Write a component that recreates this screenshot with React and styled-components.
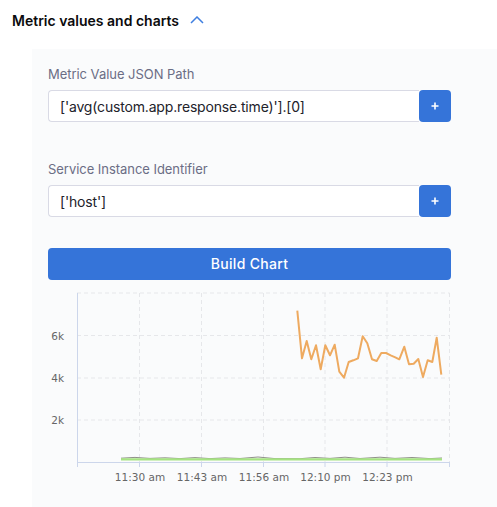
import React from "react";
import styled, { createGlobalStyle } from "styled-components";

const GlobalStyle = createGlobalStyle`
  html, body {
    margin: 0;
    padding: 0;
    background: #fff;
    font-family: Inter, "Noto Sans", sans-serif;
  }
`;

const Page = styled.div`
  width: 497px;
  height: 507px;
  overflow: hidden;
`;

const SectionHeader = styled.div`
  display: flex;
  align-items: center;
  gap: 11px;
  height: 20px;
  padding: 10px 0 0 12px;
  font-size: 14px;
  font-weight: 600;
  color: #0b0b0d;
`;

const Panel = styled.div`
  margin: 19px 0 0 32px;
  height: 455px;
  padding: 16px 46px 0 16px;
  background: #fafbfc;
`;

const Label = styled.div`
  font-size: 13px;
  line-height: 18px;
  letter-spacing: -0.04px;
  color: #6b6d85;
  margin-bottom: 7px;
`;

const FieldRow = styled.div`
  display: flex;
  height: 32px;
  margin-bottom: ${(p) => p.$gap}px;
`;

const Input = styled.div`
  flex: 1;
  display: flex;
  align-items: center;
  padding-left: 11px;
  background: #fff;
  border: 1px solid #d9dae5;
  border-right: none;
  border-radius: 4px 0 0 4px;
  font-size: 14px;
  letter-spacing: -0.17px;
  color: #22222a;
`;

const AddButton = styled.button`
  width: 32px;
  padding: 0;
  display: flex;
  align-items: center;
  justify-content: center;
  background: #3574d9;
  border: none;
  border-radius: 4px;
`;

const BuildButton = styled.button`
  display: block;
  width: 100%;
  height: 32px;
  padding: 0 0 2px;
  background: #3574d9;
  border: none;
  border-radius: 4px;
  color: #fff;
  font-family: inherit;
  font-size: 14px;
  font-weight: 500;
  letter-spacing: 0.3px;
`;

const ChartBox = styled.svg`
  display: block;
  margin: 0 0 0 -16px;
`;

const Tick = styled.text`
  font-family: "DejaVu Sans", sans-serif;
  font-size: 10.5px;
  fill: #666;
`;

// chart drawn in page coords minus the panel origin (32, 280)
const ox = 32;
const oy = 280;

const orange = [
  [297.3, 310.7], [302, 358.3], [306.7, 341], [311.3, 359.3], [316, 345.3], [320.7, 369.3],
  [325.3, 345.3], [330, 355.3], [334.7, 344.7], [339.3, 371.7], [344, 377.7], [348.7, 362],
  [353.3, 360.3], [358, 358.3], [362.7, 336.3], [367.3, 343.3], [372, 359.3], [376.7, 361],
  [381.3, 353], [386, 353], [390.7, 355.3], [395.3, 357.3], [399.3, 359.3], [404.3, 346.7],
  [409, 364.3], [413.7, 363.7], [418.3, 359], [423, 377], [427.7, 360.3], [432.3, 362],
  [436.7, 337.7], [441.3, 374.7],
];

const greys = [
  [121, 458.2], [135, 457.4], [150, 458.4], [165, 457.8], [180, 458.6], [195, 457.6], [210, 458.6],
  [225, 457.9], [240, 458.5], [258, 457], [275, 458.6], [300, 458.7], [315, 457.5], [330, 458.4],
  [345, 457.2], [360, 458.5], [380, 457.2], [395, 458.4], [412, 457.5], [430, 458.6], [442, 458],
];

const toPoints = (list) => list.map(([x, y]) => `${x - ox},${y - oy}`).join(" ");

const vLines = [139.5, 201.5, 263.5, 325, 387, 449.5];
const hLines = [293, 335.5, 378, 420];
const yTicks = [["6k", 340], ["4k", 382], ["2k", 424]];
const xTicks = [["11:30 am", 140], ["11:43 am", 202], ["11:56 am", 264], ["12:10 pm", 325.5], ["12:23 pm", 387.5]];

function Chart() {
  return (
    <ChartBox width="465" height="220" viewBox="0 0 465 220">
      {hLines.map((y) => (
        <line key={y} x1={77 - ox} x2={449.5 - ox} y1={y - oy} y2={y - oy} stroke="#e6e7ea" strokeDasharray="4 3" />
      ))}
      {vLines.map((x) => (
        <line key={x} x1={x - ox} x2={x - ox} y1={293 - oy} y2={462 - oy} stroke="#e6e7ea" strokeDasharray="4 3" />
      ))}
      <line x1={77.5 - ox} x2={77.5 - ox} y1={293 - oy} y2={467 - oy} stroke="#ccd6eb" />
      <line x1={77 - ox} x2={450 - ox} y1={462.5 - oy} y2={462.5 - oy} stroke="#ccd6eb" />
      {vLines.map((x) => (
        <line key={`t${x}`} x1={x - ox} x2={x - ox} y1={462 - oy} y2={467 - oy} stroke="#ccd6eb" />
      ))}
      <polyline points={toPoints(greys)} fill="none" stroke="#8f9188" strokeWidth="1" />
      <line x1={121 - ox} x2={442 - ox} y1={459.3 - oy} y2={459.3 - oy} stroke="#a6e382" strokeWidth="2.2" />
      <polyline points={toPoints(orange)} fill="none" stroke="#eeaa60" strokeWidth="2" strokeLinejoin="round" />
      {yTicks.map(([t, y]) => (
        <Tick key={t} x={64 - ox} y={y - oy} textAnchor="end">{t}</Tick>
      ))}
      {xTicks.map(([t, x]) => (
        <Tick key={t} x={x - ox} y={481 - oy} textAnchor="middle">{t}</Tick>
      ))}
    </ChartBox>
  );
}

const Plus = () => (
  <svg width="8" height="8" viewBox="0 0 8 8">
    <path d="M4 .5v7M.5 4h7" stroke="#fff" strokeWidth="1.6" />
  </svg>
);

export default function App() {
  return (
    <Page>
      <GlobalStyle />
      <SectionHeader>
        Metric values and charts
        <svg width="14" height="8" viewBox="0 0 14 8">
          <path d="M1 7l6-6 6 6" fill="none" stroke="#3f7fe0" strokeWidth="1.5" />
        </svg>
      </SectionHeader>
      <Panel>
        <Label>Metric Value JSON Path</Label>
        <FieldRow $gap={38}>
          <Input>['avg(custom.app.response.time)'].[0]</Input>
          <AddButton><Plus /></AddButton>
        </FieldRow>
        <Label>Service Instance Identifier</Label>
        <FieldRow $gap={31}>
          <Input>['host']</Input>
          <AddButton><Plus /></AddButton>
        </FieldRow>
        <BuildButton>Build Chart</BuildButton>
        <Chart />
      </Panel>
    </Page>
  );
}
